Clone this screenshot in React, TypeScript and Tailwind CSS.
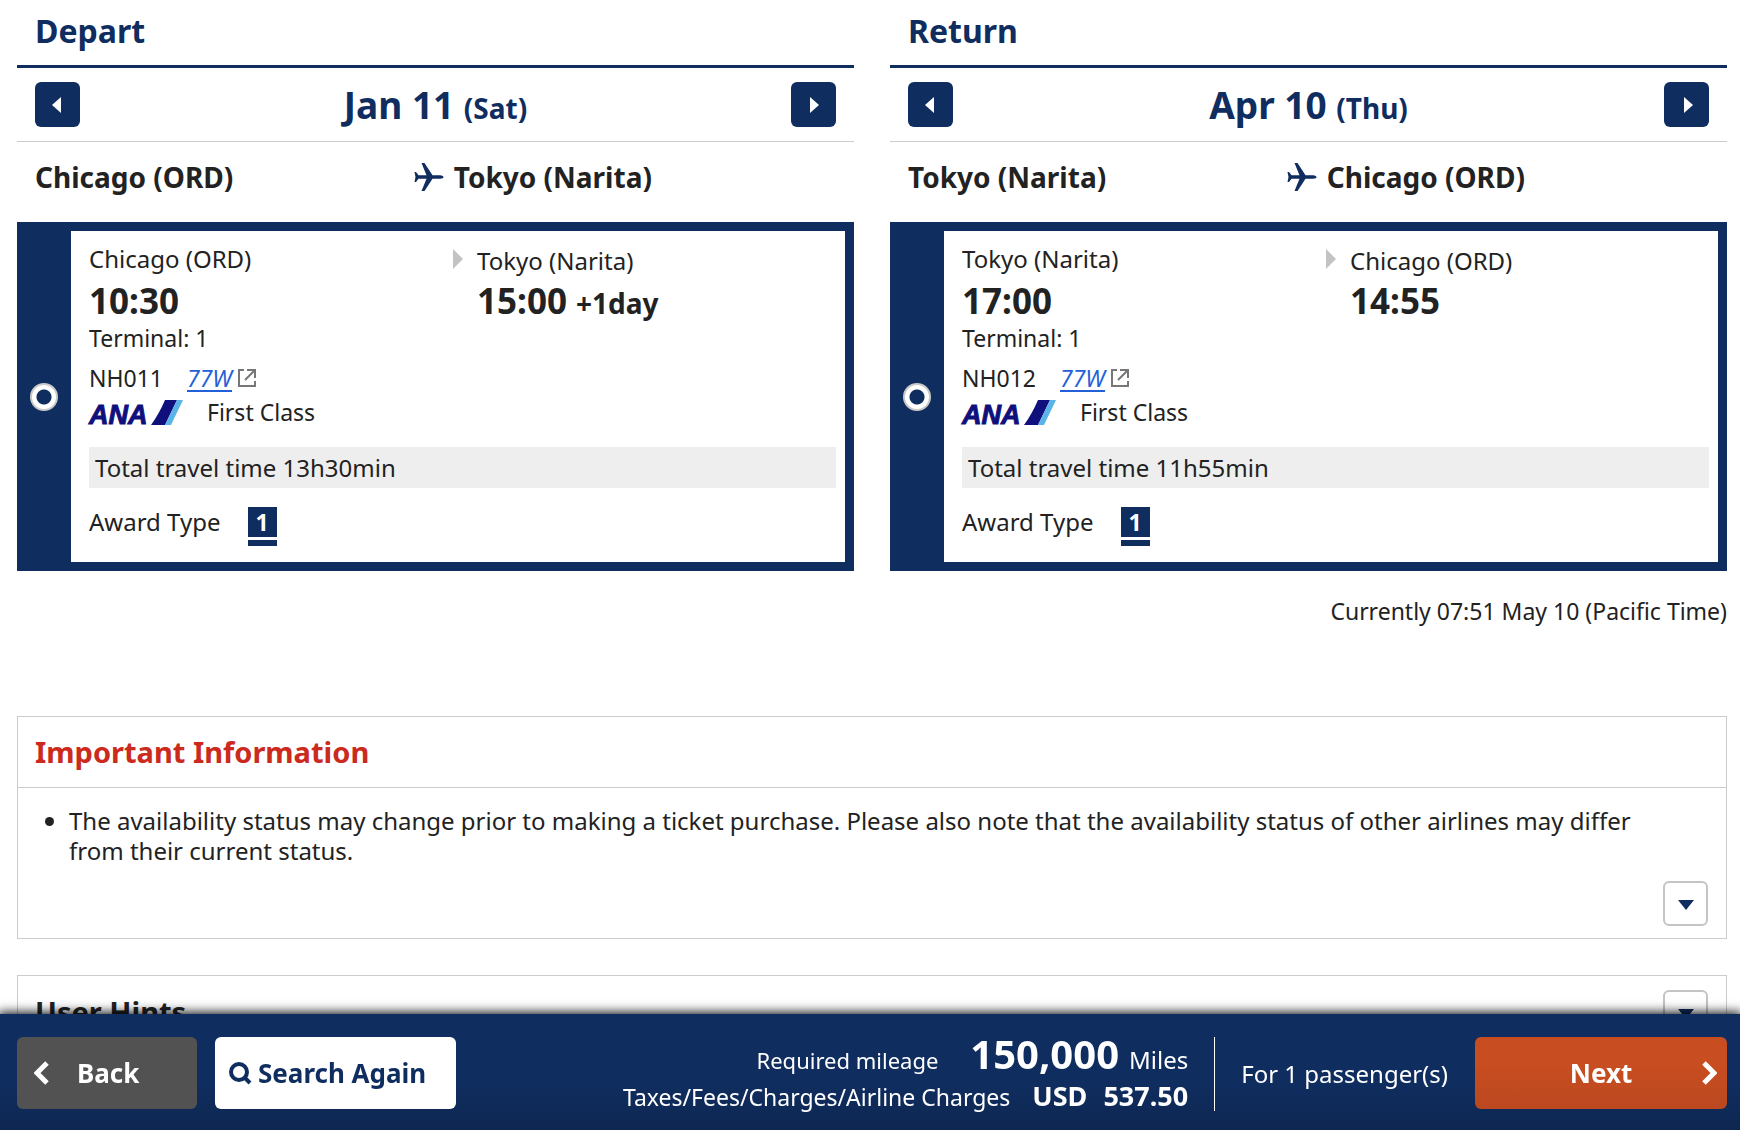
import { useState } from 'react'

interface Flight {
  id: string
  title: string
  date: string
  weekday: string
  from: string
  to: string
  departure: string
  arrival: string
  dayShift?: string
  terminal: string
  flightNo: string
  aircraft: string
  cabin: string
  travelTime: string
  award: string
}

const flights: Flight[] = [
  {
    id: 'depart',
    title: 'Depart',
    date: 'Jan 11',
    weekday: '(Sat)',
    from: 'Chicago (ORD)',
    to: 'Tokyo (Narita)',
    departure: '10:30',
    arrival: '15:00',
    dayShift: '+1day',
    terminal: 'Terminal: 1',
    flightNo: 'NH011',
    aircraft: '77W',
    cabin: 'First Class',
    travelTime: '13h30min',
    award: '1',
  },
  {
    id: 'return',
    title: 'Return',
    date: 'Apr 10',
    weekday: '(Thu)',
    from: 'Tokyo (Narita)',
    to: 'Chicago (ORD)',
    departure: '17:00',
    arrival: '14:55',
    terminal: 'Terminal: 1',
    flightNo: 'NH012',
    aircraft: '77W',
    cabin: 'First Class',
    travelTime: '11h55min',
    award: '1',
  },
]

export default function App() {
  return (
    <div className="min-h-screen bg-white pb-20 font-['Noto_Sans',sans-serif] text-[#222]">
      <main className="pl-[17px] pr-[13px]">
        <div className="grid grid-cols-2 gap-9">
          {flights.map((flight) => (
            <FlightColumn key={flight.id} flight={flight} />
          ))}
        </div>

        <p className="mt-6 text-right text-[23px] leading-8">Currently 07:51 May 10 (Pacific Time)</p>

        <section className="mt-[89px] border border-[#ccc]">
          <h2 className="border-b border-[#ccc] pl-[17px] text-[29px] font-bold leading-[70px] text-[#cb2a1d]">
            Important Information
          </h2>
          <ul className="list-disc pl-[51px] pr-12 pt-[18px] text-[24px] leading-[30px]">
            <li>
              The availability status may change prior to making a ticket purchase. Please also note that the
              availability status of other airlines may differ from their current status.
            </li>
          </ul>
          <div className="flex justify-end pb-3 pr-[18px] pt-[15px]">
            <ToggleButton label="Show more important information" />
          </div>
        </section>

        <section className="mt-9 flex items-center justify-between border border-[#ccc] pl-[17px] pr-[18px]">
          <h2 className="text-[29px] font-bold leading-[72px]">User Hints</h2>
          <ToggleButton label="Show user hints" />
        </section>
      </main>

      <BookingBar />
    </div>
  )
}

function FlightColumn({ flight }: { flight: Flight }) {
  const [selected, setSelected] = useState(true)

  return (
    <section>
      <h2 className="border-b-[3px] border-[#0f2d5f] pb-[3px] pl-[18px] text-[32px] font-bold leading-[62px] text-[#0f2d5f]">
        {flight.title}
      </h2>

      {/* Date switcher */}
      <div className="flex items-center justify-between border-b border-[#ccc] px-[18px] py-[14px] text-[#0f2d5f]">
        <DayButton direction="prev" />
        <p className="text-[37px] font-bold leading-[45px]">
          {flight.date} <span className="text-[28px] leading-none">{flight.weekday}</span>
        </p>
        <DayButton direction="next" />
      </div>

      {/* Route */}
      <div className="mb-[10px] flex pl-[18px] text-[28px] font-bold leading-[70px]">
        <p className="w-[46%]">{flight.from}</p>
        <p className="flex items-center gap-[10px] pl-[2px]">
          <PlaneIcon />
          {flight.to}
        </p>
      </div>

      {/* Flight */}
      <div className="flex border-[9px] border-l-0 border-[#0f2d5f]">
        <div className="flex w-[54px] shrink-0 items-center justify-center bg-[#0f2d5f]">
          <input
            type="radio"
            name={flight.id}
            aria-label={`${flight.flightNo} ${flight.cabin}`}
            checked={selected}
            onChange={() => setSelected(true)}
            className="h-7 w-7 appearance-none rounded-full border-2 border-[#c9c9c9] bg-white checked:bg-[radial-gradient(circle,#0f2d5f_7px,#fff_8px)]"
          />
        </div>

        <div className="flex-1 px-[9px] pb-4 pl-[18px] pt-[10px]">
          <div className="flex">
            <div className="w-[364px]">
              <p className="text-[24px] leading-9">{flight.from}</p>
              <p className="text-[35px] font-bold leading-[48px]">{flight.departure}</p>
              <p className="text-[23px] leading-[27px]">{flight.terminal}</p>
            </div>
            <div className="flex gap-[14px]">
              <svg className="mt-2 h-5 w-[10px]" viewBox="0 0 10 20" fill="#c3c3c3">
                <path d="M0 0L10 10L0 20Z" />
              </svg>
              <div>
                <p className="pt-1 text-[24px] leading-8">{flight.to}</p>
                <p className="text-[35px] font-bold leading-[48px]">
                  {flight.arrival}{' '}
                  {flight.dayShift && <span className="text-[28px] leading-none">{flight.dayShift}</span>}
                </p>
              </div>
            </div>
          </div>

          <div className="mt-[9px] flex items-center text-[23px] leading-[34px]">
            <span>{flight.flightNo}</span>
            <a href="#aircraft" className="ml-6 flex items-center gap-[6px]">
              <span className="italic text-[#2360d8] underline decoration-2 underline-offset-3">{flight.aircraft}</span>
              <ExternalIcon />
            </a>
          </div>
          <div className="flex items-center gap-6 text-[23px] leading-[34px]">
            <AnaLogo />
            <span>{flight.cabin}</span>
          </div>

          <p className="mt-[18px] bg-[#eee] pl-[6px] text-[24px] leading-[41px]">
            Total travel time {flight.travelTime}
          </p>

          <div className="mt-[19px] flex gap-[27px] text-[24px]">
            <span className="leading-[30px]">Award Type</span>
            <span className="flex w-[29px] flex-col gap-[3px]">
              <span className="bg-[#0f2d5f] text-center text-[23px] font-bold leading-[30px] text-white">
                {flight.award}
              </span>
              <span className="h-[6px] bg-[#0f2d5f]" />
            </span>
          </div>
        </div>
      </div>
    </section>
  )
}

function BookingBar() {
  return (
    <footer className="fixed inset-x-0 bottom-0 flex items-start justify-between bg-linear-to-b from-[#0f2d5f] from-60% to-[#0e2751] pb-[10px] pl-[17px] pr-[13px] pt-[23px] text-white shadow-[0_0_10px_2px_rgba(0,0,0,0.9)]">
      <div className="flex gap-[18px]">
        <button className="flex h-[72px] w-[180px] items-center gap-7 rounded-md bg-[#525252] pl-[17px] text-[26px] font-bold">
          <svg className="h-6 w-[15px]" viewBox="0 0 15 24" fill="none" stroke="currentColor" strokeWidth="5">
            <path d="M13 2L3 12L13 22" />
          </svg>
          Back
        </button>
        <button className="flex h-[72px] w-[241px] items-center gap-[6px] rounded-md bg-white pl-[14px] text-[26px] font-bold text-[#0f2d5f]">
          <svg className="h-[23px] w-[23px]" viewBox="0 0 23 23" fill="none" stroke="currentColor" strokeWidth="4">
            <circle cx="10" cy="10" r="8" />
            <path d="M15 15L21 21" />
          </svg>
          Search Again
        </button>
      </div>

      <div className="flex items-start">
        <div className="text-right">
          <p className="text-[40px] font-bold leading-[34px]">
            <span className="mr-8 text-[22px] font-normal leading-none">Required mileage</span>
            150,000
            <span className="ml-[10px] text-[24px] font-normal leading-none">Miles</span>
          </p>
          <p className="text-[27px] font-bold leading-[48px]">
            <span className="mr-[22px] text-[23px] font-normal leading-none">Taxes/Fees/Charges/Airline Charges</span>
            USD<span className="ml-4">537.50</span>
          </p>
        </div>
        <p className="ml-[26px] border-l border-white pl-[26px] text-[24px] leading-[74px]">For 1 passenger(s)</p>
        <button className="ml-[27px] flex h-[72px] w-[252px] items-center rounded-md bg-linear-to-b from-[#c84d20] from-40% to-[#bb4820] pl-[25px] pr-[10px] text-[26px] font-bold">
          <span className="flex-1 text-center">Next</span>
          <svg className="h-6 w-[15px]" viewBox="0 0 15 24" fill="none" stroke="currentColor" strokeWidth="5">
            <path d="M2 2L12 12L2 22" />
          </svg>
        </button>
      </div>
    </footer>
  )
}

function DayButton({ direction }: { direction: 'prev' | 'next' }) {
  return (
    <button
      aria-label={direction === 'prev' ? 'Previous day' : 'Next day'}
      className="flex h-[45px] w-[45px] items-center justify-center rounded-md bg-[#0f2d5f]"
    >
      <svg className="h-4 w-[14px]" viewBox="0 0 14 16" fill="#fff">
        <path d={direction === 'prev' ? 'M10 0V16L1 8Z' : 'M4 0V16L13 8Z'} />
      </svg>
    </button>
  )
}

function ToggleButton({ label }: { label: string }) {
  return (
    <button
      aria-label={label}
      className="flex h-[45px] w-[45px] items-center justify-center rounded-md border-2 border-[#c4c4c4] bg-white"
    >
      <svg className="mt-[3px] h-[10px] w-4" viewBox="0 0 16 10" fill="#0f2d5f">
        <path d="M0 0H16L8 10Z" />
      </svg>
    </button>
  )
}

function PlaneIcon() {
  return (
    <svg className="h-7 w-[30px]" viewBox="0 0 30 28" fill="#0f2d5f">
      <path d="M7.5 0H10.5L18.5 12.2H26Q29.5 12.6 29.5 14Q29.5 15.4 26 15.8H18.5L10.5 28H7.5L12.5 15.8H4.5L2 19H0.5L1.5 14L0.5 9H2L4.5 12.2H12.5Z" />
    </svg>
  )
}

function ExternalIcon() {
  return (
    <svg className="h-[18px] w-[18px]" viewBox="0 0 18 18" fill="none" stroke="#777" strokeWidth="2">
      <path d="M6 1H1V17H17V12" />
      <path d="M9 1H17V9M16.5 1.5L7 11" />
    </svg>
  )
}

function AnaLogo() {
  return (
    <svg className="h-[34px] w-[94px]" viewBox="0 -5 94 34" overflow="visible" role="img" aria-label="ANA">
      <text
        x="0"
        y="24"
        fill="#10107d"
        stroke="#10107d"
        className="font-['Liberation_Sans',sans-serif] text-[27px] font-bold italic"
      >
        ANA
      </text>
      <path d="M76 0H88L76 25H62Q70 14 76 0Z" fill="#10107d" />
      <path d="M88 0H94L82 25H76Z" fill="#5ab4e8" />
    </svg>
  )
}
